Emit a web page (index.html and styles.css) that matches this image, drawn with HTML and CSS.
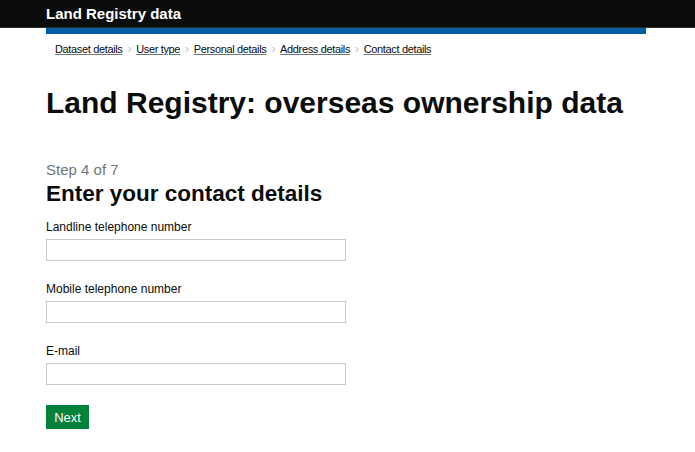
FILE: index.html
```html
<!DOCTYPE html>
<html lang="en">
<head>
<meta charset="utf-8">
<title>Land Registry: overseas ownership data</title>
<link rel="stylesheet" href="styles.css">
</head>
<body>
<header class="site-header">
  <div class="container">
    <span class="site-title">Land Registry data</span>
  </div>
</header>
<div class="container">
  <div class="phase-bar"></div>
  <nav class="breadcrumbs">
    <a href="#">Dataset details</a><span class="sep">›</span>
    <a href="#">User type</a><span class="sep">›</span>
    <a href="#">Personal details</a><span class="sep">›</span>
    <a href="#">Address details</a><span class="sep">›</span>
    <a href="#">Contact details</a>
  </nav>
  <h1 class="page-title">Land Registry: overseas ownership data</h1>
  <form class="form">
    <p class="step">Step 4 of 7</p>
    <h2 class="form-title">Enter your contact details</h2>
    <div class="field">
      <label class="label" for="landline">Landline telephone number</label>
      <input class="input" id="landline" type="text">
    </div>
    <div class="field">
      <label class="label" for="mobile">Mobile telephone number</label>
      <input class="input" id="mobile" type="text">
    </div>
    <div class="field">
      <label class="label" for="email">E-mail</label>
      <input class="input" id="email" type="text">
    </div>
    <button class="button" type="button">Next</button>
  </form>
</div>
</body>
</html>
```
FILE: styles.css
```css
html, body {
  margin: 0;
  padding: 0;
  background: #fff;
  font-family: "Liberation Sans", Arial, sans-serif;
  color: #0b0c0c;
}
.container {
  width: 600px;
  margin-left: 46px;
}
.site-header {
  background: #0b0c0c;
  height: 27px;
  border-bottom: 1px solid #2a2a2a;
}
.site-title {
  display: block;
  color: #fff;
  font-weight: bold;
  font-size: 15px;
  line-height: 27px;
}
.phase-bar {
  height: 6px;
  background: #005ea5;
}
.breadcrumbs {
  display: flex;
  align-items: center;
  padding-left: 9px;
  margin-top: 9px;
  font-size: 11px;
  line-height: 13px;
  letter-spacing: -0.35px;
}
.breadcrumbs a {
  color: #0b0c0c;
  text-decoration: underline;
  text-decoration-color: #6f777b;
}
.breadcrumbs .sep {
  color: #bfc1c3;
  font-size: 12px;
  margin: 0 5px 0 5px;
}
.page-title {
  margin: 27px 0 0;
  font-size: 30px;
  line-height: 40px;
  font-weight: bold;
}
.form {
  margin-top: 37px;
}
.step {
  margin: 0;
  font-size: 15px;
  line-height: 20px;
  color: #6f777b;
}
.form-title {
  margin: 0;
  font-size: 22.5px;
  line-height: 28px;
  font-weight: bold;
}
.field {
  margin-top: 11px;
  margin-bottom: 20px;
}
.field + .field {
  margin-top: 0;
}
.label {
  display: block;
  font-size: 12px;
  line-height: 16px;
  margin-bottom: 4px;
}
.input {
  display: block;
  box-sizing: border-box;
  width: 300px;
  height: 22px;
  margin: 0;
  border: 1px solid #cbcbcb;
  padding: 2px 4px;
  font-size: 13px;
  font-family: inherit;
}
.button {
  display: block;
  margin-top: 0;
  width: 43px;
  height: 24px;
  padding: 0;
  border: 0;
  background: #00823b;
  box-shadow: 0 2px 0 #003618;
  color: #fff;
  font-family: inherit;
  font-size: 13px;
}
```
